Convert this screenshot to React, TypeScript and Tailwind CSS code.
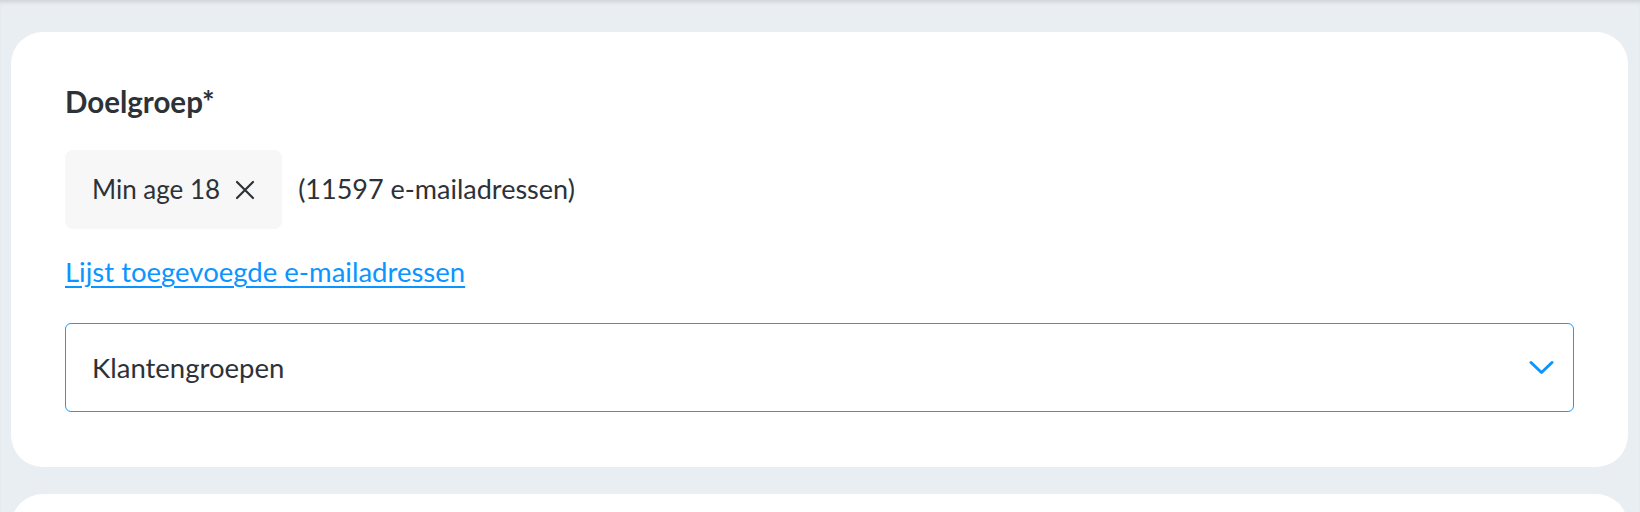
const font = { fontFamily: "Lato, 'Noto Sans', sans-serif" };

function Chevron() {
  return (
    <svg width="25" height="15" viewBox="0 0 25 15" fill="none" className="text-[#0a95ff]">
      <polyline points="2,2.5 12.5,12.5 23,2.5" stroke="currentColor" strokeWidth="3" strokeLinecap="round" strokeLinejoin="round" />
    </svg>
  );
}

function Cross() {
  return (
    <svg width="20" height="20" viewBox="0 0 20 20" fill="none" className="text-[#2d3238]">
      <path d="M2 2L18 18M18 2L2 18" stroke="currentColor" strokeWidth="2.2" strokeLinecap="round" />
    </svg>
  );
}

function TargetGroup() {
  return (
    <section className="mx-[11px] mr-[12px] rounded-[32px] bg-white px-[54px] pt-[51px] pb-[55px]">
      <h2 className="text-[29.5px] font-bold leading-[38px] text-[#2d3238]">Doelgroep*</h2>

      {/* selected segment */}
      <div className="mt-[29px] flex items-center gap-4">
        <span className="flex h-[79px] items-center gap-[15px] rounded-lg bg-[#f7f7f7] pl-[27px] pr-[27px] text-[26px] text-[#2d3238]">
          Min age 18
          <Cross />
        </span>
        <span className="text-[27px] text-[#2d3238]">(11597 e-mailadressen)</span>
      </div>

      <a href="#" className="mt-[26px] inline-block text-[27.5px] leading-[34px] text-[#0a95ff] underline underline-offset-[4px]">
        Lijst toegevoegde e-mailadressen
      </a>

      <button className="mt-[34px] flex h-[89px] w-full items-center justify-between rounded-md border border-[#1a9bff] pl-[26px] pr-[19px] text-left text-[27.5px] text-[#2d3238]">
        Klantengroepen
        <Chevron />
      </button>
    </section>
  );
}

export default function App() {
  return (
    <div style={font} className="min-h-screen bg-[#e9eef2] pt-[32px] shadow-[inset_0_4px_4px_-2px_rgba(0,0,0,0.12)]">
      <TargetGroup />
      <section className="mx-[11px] mr-[12px] mt-[27px] h-[200px] rounded-[32px] bg-white" />
    </div>
  );
}
